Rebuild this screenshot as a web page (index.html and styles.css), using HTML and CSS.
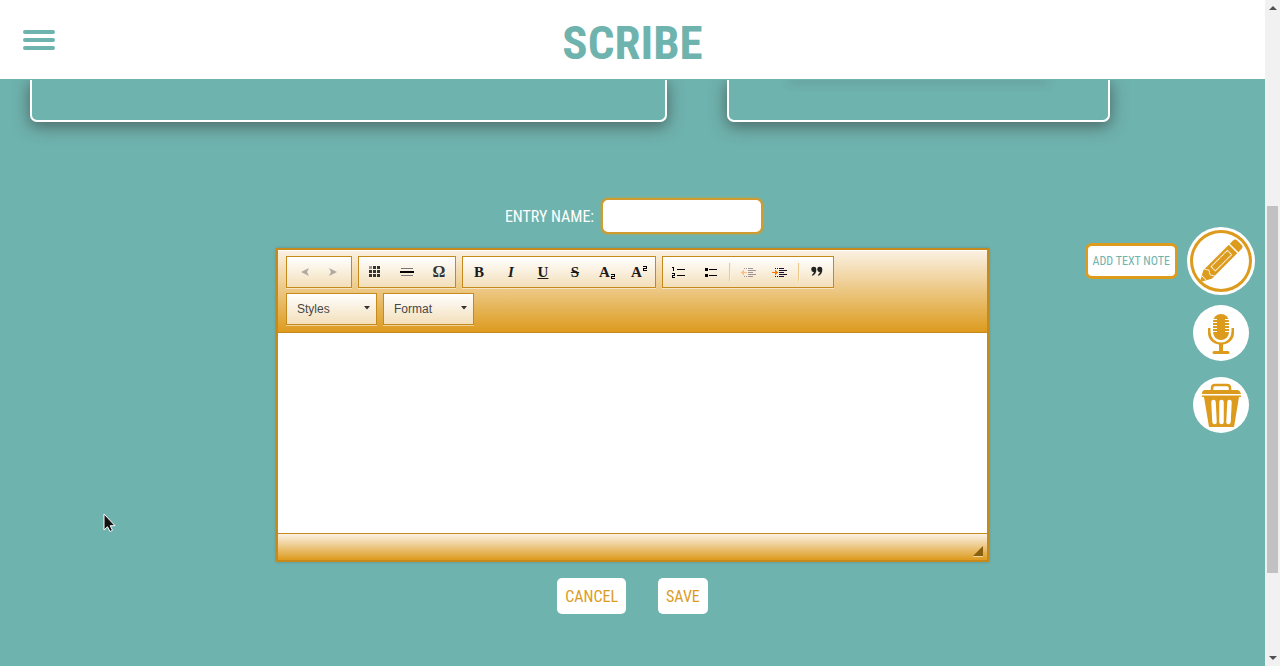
FILE: index.html
```html
<!DOCTYPE html>
<html lang="en">
<head>
<meta charset="utf-8">
<title>Scribe</title>
<link rel="stylesheet" href="styles.css">
</head>
<body>
<div class="app">
  <div class="page">
    <header class="topbar">
      <button class="menu" type="button" aria-label="Menu"><span></span><span></span><span></span></button>
      <h1 class="brand">SCRIBE</h1>
    </header>
    <main class="content">
      <section class="cards">
        <div class="card"></div>
        <div class="card"><div class="card-inner"></div></div>
      </section>
      <form class="entry">
        <div class="entry-name">
          <label for="entry-name">ENTRY NAME:</label>
          <input id="entry-name" type="text">
        </div>
        <div class="editor">
          <div class="toolbar">
            <div class="tool-row">
              <div class="group">
                <button type="button" class="tool faded" aria-label="Undo"><svg viewBox="0 0 16 16"><path d="M6 8l8-4-2 4 2 4z" fill="#444"/></svg></button>
                <button type="button" class="tool faded" aria-label="Redo"><svg viewBox="0 0 16 16"><path d="M10 8L2 4l2 4-2 4z" fill="#444"/></svg></button>
              </div>
              <div class="group">
                <button type="button" class="tool" aria-label="Table"><svg viewBox="0 0 16 16" shape-rendering="crispEdges"><path fill="#999" d="M2 2h3v3H2z"/><path fill="#333" d="M6 2h3v3H6zM10 2h3v3h-3zM2 6h3v3H2zM6 6h3v3H6zM10 6h3v3h-3zM2 10h3v3H2zM6 10h3v3H6zM10 10h3v3h-3z"/></svg></button>
                <button type="button" class="tool" aria-label="Horizontal line"><svg viewBox="0 0 16 16" shape-rendering="crispEdges"><path fill="#777" d="M2 4h12v1H2zM2 11h12v1H2z"/><path d="M1 7h14v2H1z"/></svg></button>
                <button type="button" class="tool omega" aria-label="Special character">Ω</button>
              </div>
              <div class="group">
                <button type="button" class="tool">B</button>
                <button type="button" class="tool italic">I</button>
                <button type="button" class="tool underline">U</button>
                <button type="button" class="tool strike">S</button>
                <button type="button" class="tool" aria-label="Subscript">A<svg class="index low" viewBox="0 0 4 5" shape-rendering="crispEdges"><path d="M0 0h4v3H1v1h3v1H0V2h3V1H0z"/></svg></button>
                <button type="button" class="tool" aria-label="Superscript">A<svg class="index high" viewBox="0 0 4 5" shape-rendering="crispEdges"><path d="M0 0h4v3H1v1h3v1H0V2h3V1H0z"/></svg></button>
              </div>
              <div class="group">
                <button type="button" class="tool" aria-label="Numbered list"><svg viewBox="0 0 16 16" shape-rendering="crispEdges"><path d="M1 3h2v4H2V4H1zM1 9h3v3H2v1h2v1H1v-3h2v-1H1zM6 5h8v1H6zM6 11h8v1H6z"/></svg></button>
                <button type="button" class="tool" aria-label="Bulleted list"><svg viewBox="0 0 16 16" shape-rendering="crispEdges"><path d="M2 4h3v3H2zM2 10h3v3H2zM6 5h8v1H6zM6 11h8v1H6z"/></svg></button>
                <span class="divider"></span>
                <button type="button" class="tool faded" aria-label="Decrease indent"><svg viewBox="0 0 16 16" shape-rendering="crispEdges"><path fill="#201030" d="M4 4h1v1H4zM6 4h1v1H6zM8 4h5v1H8zM8 6h8v1H8zM8 8h5v1H8zM8 10h8v1H8zM4 12h1v1H4zM6 12h1v1H6zM8 12h5v1H8z"/><path fill="#f70" d="M1 8h1V7h1V6h1v2h3v1H4v2H3v-1H2V9H1z"/></svg></button>
                <button type="button" class="tool" aria-label="Increase indent"><svg viewBox="0 0 16 16" shape-rendering="crispEdges"><path fill="#201030" d="M3 4h1v1H3zM5 4h1v1H5zM7 4h5v1H7zM7 6h8v1H7zM7 8h5v1H7zM7 10h8v1H7zM3 12h1v1H3zM5 12h1v1H5zM7 12h5v1H7z"/><path fill="#f70" d="M0 8h3V6h1v1h1v1h1v1H5v1H4v1H3V9H0z"/></svg></button>
                <span class="divider"></span>
                <button type="button" class="tool" aria-label="Block quote"><svg viewBox="0 0 16 16"><path fill="#222" d="M2.300 5.300a2.400 2.400 0 0 1 5-.3c.3 3.500-1.500 6-4 6.800l-.5-.8c1.300-.8 2-1.900 2-3-1.500.2-2.500-1-2.500-2.700zM8.300 5.300a2.400 2.400 0 0 1 5-.3c.3 3.500-1.500 6-4 6.800l-.5-.8c1.300-.8 2-1.900 2-3-1.500.2-2.500-1-2.500-2.700z"/></svg></button>
              </div>
            </div>
            <div class="tool-row">
              <div class="combo"><select aria-label="Styles"><option>Styles</option></select><svg viewBox="0 0 6 4"><path d="M0 0h6L3 3.500z"/></svg></div>
              <div class="combo"><select aria-label="Format"><option>Format</option></select><svg viewBox="0 0 6 4"><path d="M0 0h6L3 3.500z"/></svg></div>
            </div>
          </div>
          <textarea class="editing" aria-label="Entry text"></textarea>
          <div class="statusbar"><svg viewBox="0 0 10 11"><path fill="#fff" opacity=".5" d="M0 10h10v1H0z"/><path fill="#88610f" d="M10 0v10H0z"/></svg></div>
        </div>
        <div class="actions">
          <button type="button" class="action">CANCEL</button>
          <button type="button" class="action">SAVE</button>
        </div>
      </form>
    </main>
    <nav class="fabs" aria-label="Entry tools">
      <div class="fab-row">
        <span class="tip" id="tip">ADD TEXT NOTE</span>
        <button type="button" class="fab active" aria-labelledby="tip">
          <svg viewBox="0 0 56 56"><g transform="translate(28 28) rotate(-45)"><path fill="#dd9b1e" d="M-28-1L-19-6H17V6H-19L-28 1zM18.500-6H23a3 3 0 0 1 3 3v6a3 3 0 0 1-3 3h-4.500z"/><path fill="none" stroke="#fff" stroke-dasharray="1.500 .4" d="M-24-3V3M-17.500-6L-15-2L-17.500 2L-15 6M-11-3H12V3H-11z"/></g></svg>
        </button>
      </div>
      <button type="button" class="fab" aria-label="Record audio">
        <svg viewBox="0 0 56 56"><g fill="#dd9b1e"><rect x="20" y="9" width="16" height="26" rx="8"/><path d="M15 23h2.500v4a10.500 10.500 0 0 0 21 0v-4H41v5c0 6-4.500 10.500-11 11.500V46h5a1.500 1.500 0 0 1 0 3H21a1.500 1.500 0 0 1 0-3h5v-6.500C19.500 38.500 15 34 15 28z"/></g><path stroke="#fff" d="M20 14.500h4M20 17.500h4M20 20.500h4M20 23.500h4M20 26.500h4M32 14.500h4M32 17.500h4M32 20.500h4M32 23.500h4M32 26.500h4"/></svg>
      </button>
      <button type="button" class="fab" aria-label="Delete">
        <svg viewBox="0 0 56 56"><path fill="none" stroke="#dd9b1e" stroke-width="2.500" d="M19 14v-3q0-3 3-3h12q3 0 3 3v3"/><path fill="#dd9b1e" d="M12 13h32q3 0 4 4H9q0-4 3-4zM9 18.500h39v1.500H9zM11 20h35l-5 30H16z"/><path stroke="#fff" stroke-width="4.500" stroke-linecap="round" d="M20.500 25L21.500 45M28.500 25v20M36.500 25L35.500 45"/></svg>
      </button>
    </nav>
    <svg class="pointer" viewBox="0 0 14 20"><path d="M1 1v16l3.500-3.300L7 18.500l2.500-1.200-2.300-4.600H12z" fill="#111" stroke="#fff"/></svg>
  </div>
  <div class="scrollbar" aria-hidden="true">
    <svg viewBox="0 0 8 4"><path d="M0 4L4 0l4 4z"/></svg>
    <div class="track"><div class="thumb"></div></div>
    <svg viewBox="0 0 8 4"><path d="M0 0h8L4 4z"/></svg>
  </div>
</div>
</body>
</html>
```
FILE: styles.css
```css
:root {
  --teal: #6fb3ae;
  --gold: #dd9b1e;
  --gold-dark: #c58a1b;
  --narrow: "Liberation Sans Narrow", "Roboto Condensed", "DejaVu Sans Condensed", sans-serif;
}
* { box-sizing: border-box; }
body { margin: 0; background: var(--teal); font-family: "Liberation Sans", sans-serif; }
button, input, select, textarea { font: inherit; margin: 0; padding: 0; border: 0; }
.app { display: grid; grid-template-columns: 1fr 15px; height: 100vh; }
.page { position: relative; overflow: hidden; }
.topbar {
  position: relative; z-index: 1; height: 79px;
  display: grid; grid-template-columns: 1fr auto 1fr; align-items: center;
  padding: 0 23px; background: #fff;
  box-shadow: 0 1px 0 var(--teal);
}
.menu { display: grid; gap: 4px; width: 32px; background: none; }
.menu span { height: 4px; border-radius: 2px; background: var(--teal); }
.brand { margin: 0; padding-top: 6px; font: bold 47px/1 var(--narrow); color: var(--teal); }

.cards {
  display: grid; grid-template-columns: 637fr 383fr; gap: 60px;
  padding: 0 155px 0 30px;
}
.card {
  height: 43px; padding: 0 60px;
  border: 2px solid #fff; border-top: 0; border-radius: 0 0 7px 7px;
  box-shadow: 0 4px 16px 1px rgba(50, 50, 50, .55);
}
.card-inner { height: 1px; box-shadow: 0 2px 9px rgba(50, 50, 50, .8); }

.entry { display: flex; flex-direction: column; align-items: center; padding-top: 76px; }
.entry-name { display: flex; align-items: center; gap: 7px; padding-left: 3px; }
.entry-name label { padding-top: 2px; font: 16px/20px var(--narrow); color: #fff; }
.entry-name input {
  width: 162px; height: 36px; padding: 0 8px;
  border: 2px solid #cf9c30; border-radius: 7px; background: #fff;
  box-shadow: 0 0 2px var(--gold);
}
.editor {
  width: 713px; max-width: 100%; margin-top: 14px;
  border: 2px solid var(--gold-dark); background: #fff;
  box-shadow: 0 0 3px rgba(0, 0, 0, .2);
}
.toolbar {
  display: grid; gap: 5px; padding: 6px 8px 7px;
  border-bottom: 1px solid var(--gold-dark);
  background: linear-gradient(#fbf2e5, var(--gold));
  box-shadow: inset 0 1px #fff;
}
.tool-row { display: flex; gap: 6px; }
.group, .combo {
  display: flex; align-items: center; height: 32px;
  border: 1px solid var(--gold-dark);
  background: linear-gradient(#fff, #f3dfba);
  box-shadow: 0 1px rgba(255, 255, 255, .5);
}
.tool {
  position: relative; display: flex; align-items: center; justify-content: center;
  width: 32px; height: 30px; background: none;
  font: bold 15px/1 "Liberation Serif", serif; color: #1a1a1a;
}
.tool svg { width: 16px; height: 16px; }
.tool .index { width: 4px; height: 5px; margin-left: 1px; }
.low { align-self: flex-end; margin-bottom: 8px; }
.high { align-self: flex-start; margin-top: 9px; }
.faded { opacity: .4; }
.omega { font: bold 16px/1 "Liberation Serif", serif; color: #333; }
.italic { font-style: italic; }
.underline { text-decoration: underline; }
.strike { text-decoration: line-through; }
.divider { width: 2px; height: 18px; margin: 0 1px 0 2px; border-left: 1px solid #edc98c; background: #fbf1de; }
.combo { position: relative; width: 91px; }
.combo select {
  width: 100%; height: 30px; padding: 0 10px; appearance: none;
  background: none; font-size: 12px; color: #474747;
}
.combo svg { position: absolute; right: 6px; top: 12px; width: 6px; height: 4px; fill: #333; pointer-events: none; }
.editing { display: block; width: 100%; height: 200px; padding: 20px; resize: none; background: #fff; }
.statusbar {
  display: flex; justify-content: flex-end; align-items: flex-end; height: 27px; padding: 0 4px 3px;
  border-top: 1px solid var(--gold-dark);
  background: linear-gradient(#fbf2e5, var(--gold));
}
.statusbar svg { width: 10px; height: 11px; }
.actions { display: flex; gap: 32px; margin-top: 16px; }
.action {
  height: 36px; padding: 2px 8px 0; border-radius: 5px; background: #fff;
  font: 16px/34px var(--narrow); color: var(--gold);
}

.fabs {
  position: absolute; top: 233px; right: 16px;
  display: flex; flex-direction: column; align-items: flex-end; gap: 16px;
}
.fab-row { display: flex; align-items: center; gap: 15px; }
.fab { width: 56px; height: 56px; border-radius: 50%; background: #fff; }
.fab svg { display: block; width: 56px; height: 56px; }
.active { box-shadow: 0 0 0 3px var(--gold), 0 0 0 6px #fff; }
.tip {
  padding: 7px 5px 6px; border: 3px solid var(--gold); border-radius: 7px;
  background: #fff; font: 12px/17px var(--narrow); color: var(--teal); white-space: nowrap;
}
.pointer { position: absolute; left: 103px; top: 513px; width: 14px; height: 20px; }

.scrollbar { display: flex; flex-direction: column; align-items: center; padding: 6px 2px; background: #f1f1f1; }
.scrollbar svg { width: 8px; height: 4px; fill: #505050; }
.track { flex: 1; width: 11px; padding: 196px 0 83px; }
.thumb { height: 100%; background: #c1c1c1; }
```
